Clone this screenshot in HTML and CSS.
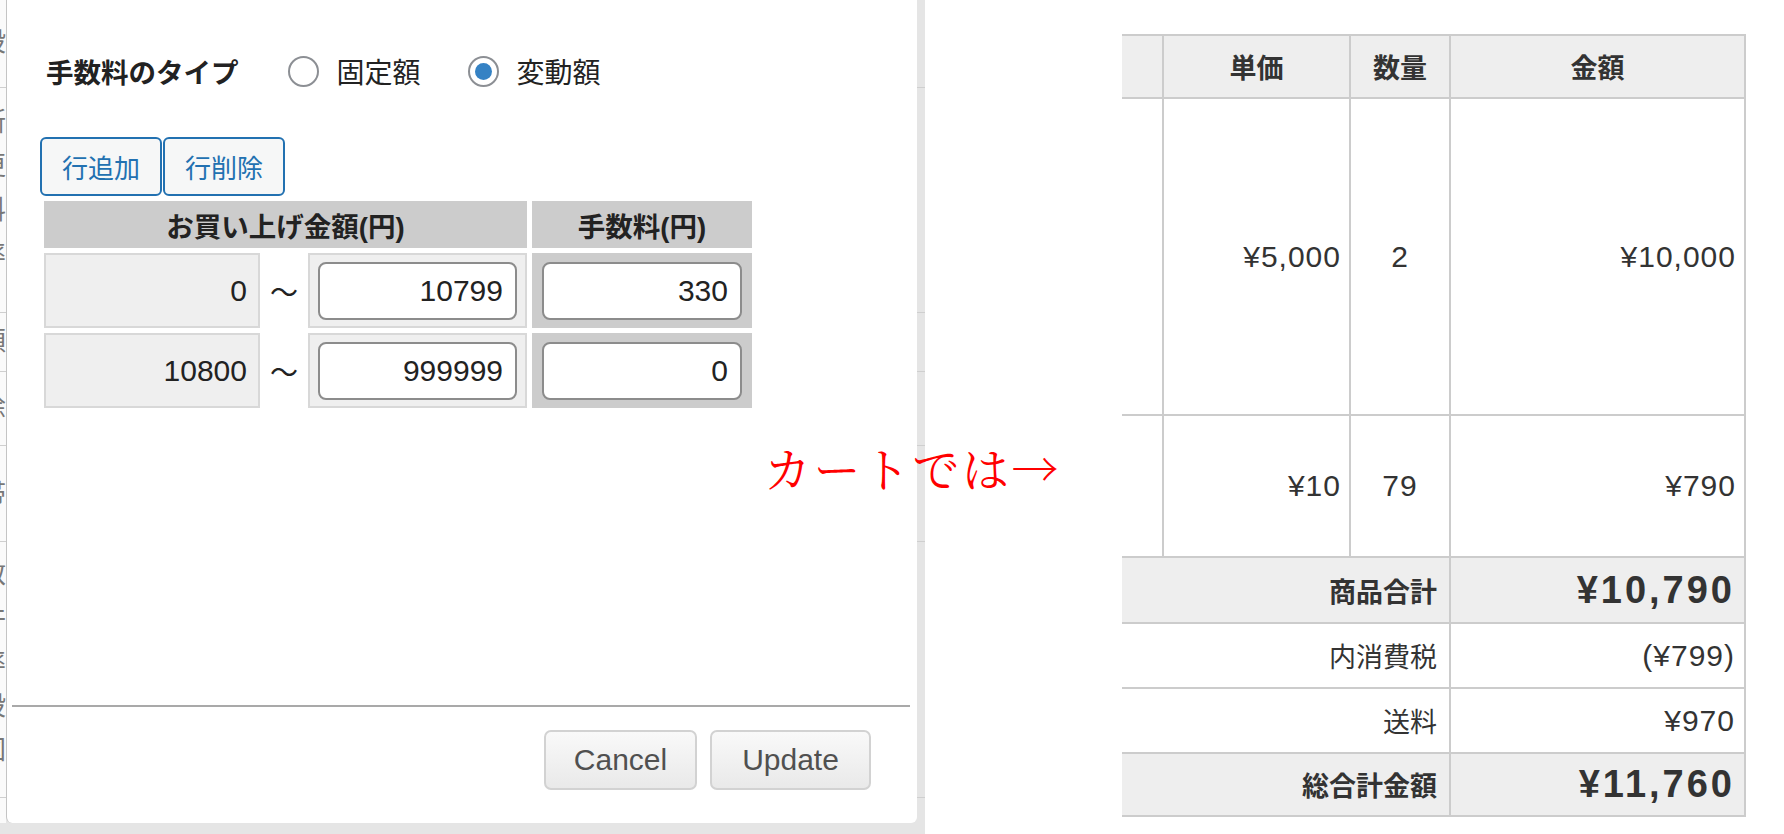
FILE: index.html
```html
<!DOCTYPE html>
<html lang="ja">
<head>
  <meta charset="UTF-8" />
  <meta name="viewport" content="width=device-width, initial-scale=1.0"/>
  <title>手数料の設定</title>
  <link rel="stylesheet" href="styles.css">
</head>
<body>

<div class="stage">
  <!-- page behind the dialog, only a sliver shows -->
  <div class="behind">
    <div class="behind-row"><span>設</span></div>
    <div class="behind-row"><span>新</span><span>更</span><span>料</span><span>率</span></div>
    <div class="behind-row"><span>額</span></div>
    <div class="behind-row"><span>除</span></div>
    <div class="behind-row"><span>帯</span></div>
    <div class="behind-row"><span>数</span><span>件</span><span>率</span><span>設</span><span>図</span></div>
    <div class="behind-row"></div>
  </div>

  <div class="modal">
    <div class="modal-body">
      <div class="fee-type">
        <h2>手数料のタイプ</h2>
        <label class="opt"><input type="radio" name="feetype"> 固定額</label>
        <label class="opt"><input type="radio" name="feetype" checked> 変動額</label>
      </div>

      <div class="row-btns">
        <button class="btn-line">行追加</button>
        <button class="btn-line">行削除</button>
      </div>

      <table class="range-table">
        <thead>
          <tr>
            <th colspan="3">お買い上げ金額(円)</th>
            <th>手数料(円)</th>
          </tr>
        </thead>
        <tbody>
          <tr>
            <td class="from">0</td>
            <td class="tilde">〜</td>
            <td class="to"><input class="num" type="text" value="10799"></td>
            <td class="fee"><input class="num" type="text" value="330"></td>
          </tr>
          <tr>
            <td class="from">10800</td>
            <td class="tilde">〜</td>
            <td class="to"><input class="num" type="text" value="999999"></td>
            <td class="fee"><input class="num" type="text" value="0"></td>
          </tr>
        </tbody>
      </table>
    </div>

    <div class="modal-foot">
      <hr>
      <div class="foot-btns">
        <button class="btn-plain cancel">Cancel</button>
        <button class="btn-plain update">Update</button>
      </div>
    </div>
  </div>
</div>

<div class="cart">
  <table class="cart-table">
    <colgroup>
      <col class="c-item">
      <col class="c-price">
      <col class="c-qty">
      <col class="c-amount">
    </colgroup>
    <thead>
      <tr>
        <th class="item"></th>
        <th>単価</th>
        <th>数量</th>
        <th>金額</th>
      </tr>
    </thead>
    <tbody>
      <tr class="line big">
        <td class="item"></td>
        <td class="money">¥5,000</td>
        <td class="qty">2</td>
        <td class="money">¥10,000</td>
      </tr>
      <tr class="line">
        <td class="item"></td>
        <td class="money">¥10</td>
        <td class="qty">79</td>
        <td class="money">¥790</td>
      </tr>
      <tr class="sum strong">
        <td class="label" colspan="3">商品合計</td>
        <td class="money">¥10,790</td>
      </tr>
      <tr class="sum">
        <td class="label" colspan="3">内消費税</td>
        <td class="money">(¥799)</td>
      </tr>
      <tr class="sum">
        <td class="label" colspan="3">送料</td>
        <td class="money">¥970</td>
      </tr>
      <tr class="sum strong grand">
        <td class="label" colspan="3">総合計金額</td>
        <td class="money">¥11,760</td>
      </tr>
    </tbody>
  </table>
</div>

<div class="cart-note">カートでは→</div>

</body>
</html>
```

FILE: styles.css
```css
body {
  margin: 0;
  width: 1784px;
  height: 834px;
  overflow: hidden;
  position: relative;
  display: flex;
  background: #fff;
  font-family: "Liberation Sans", "Noto Sans CJK JP", sans-serif;
  color: #222;
}

/* left half : dialog over the admin page */
.stage {
  position: relative;
  flex: none;
  width: 925px;
  height: 834px;
  background: #e5e5e5;
}
.behind {
  width: 925px;
  height: 823px;
  overflow: hidden;
  background: linear-gradient(to right, #fafafa 0, #fafafa 6px, transparent 6px);
}
.behind-row {
  box-sizing: border-box;
  border-bottom: 1px solid #cfcfcf;
  font-size: 26px;
  color: #777;
  overflow: hidden;
}
.behind-row span {
  display: block;
  margin-left: -20px;
  line-height: 44px;
}
.behind-row:nth-child(1) { height: 88px; padding-top: 20px; }
.behind-row:nth-child(2) { height: 225px; padding-top: 12px; }
.behind-row:nth-child(3) { height: 59px; padding-top: 6px; }
.behind-row:nth-child(4) { height: 74px; padding-top: 14px; }
.behind-row:nth-child(5) { height: 96px; padding-top: 26px; }
.behind-row:nth-child(6) { height: 256px; padding-top: 10px; }
.behind-row:nth-child(7) { height: 25px; border-bottom: none; }

.modal {
  position: absolute;
  left: 6px;
  top: 0;
  width: 911px;
  height: 823px;
  box-sizing: border-box;
  background: #fff;
  border-left: 1px solid #c4c4c4;
  border-radius: 0 0 6px 6px;
  display: flex;
  flex-direction: column;
}
.modal-body {
  flex: 1;
  padding: 49px 0 0 33px;
}

.fee-type {
  display: flex;
  align-items: center;
  height: 44px;
  padding-left: 6px;
}
.fee-type h2 {
  margin: 0 49px 0 0;
  font-size: 27.5px;
  font-weight: bold;
}
.opt {
  display: flex;
  align-items: center;
  gap: 18px;
  margin-right: 47px;
  font-size: 28px;
}
.opt input {
  appearance: none;
  -webkit-appearance: none;
  margin: 0;
  width: 31px;
  height: 31px;
  box-sizing: border-box;
  border: 2px solid #8c8f94;
  border-radius: 50%;
  background: #fff;
  display: grid;
  place-content: center;
}
.opt input:checked::before {
  content: "";
  display: block;
  width: 17px;
  height: 17px;
  border-radius: 50%;
  background: #3582c4;
}

.row-btns {
  display: flex;
  gap: 1px;
  margin-top: 44px;
}
.btn-line {
  width: 122px;
  height: 59px;
  padding: 0;
  border: 2px solid #2271b1;
  border-radius: 6px;
  background: #f6f7f7;
  color: #2271b1;
  font-family: inherit;
  font-size: 26px;
}

.range-table {
  border-spacing: 5px;
  margin-left: -1px;
}
.range-table th {
  height: 47px;
  padding: 0;
  background: #cccccc;
  font-size: 27.5px;
  font-weight: bold;
  text-align: center;
  color: #222;
}
.range-table td {
  box-sizing: border-box;
  height: 75px;
  padding: 0;
}
.range-table .from {
  width: 216px;
  padding-right: 11px;
  border: 2px solid #d8d8d8;
  background: #efefef;
  text-align: right;
  font-size: 30px;
}
.range-table .tilde {
  width: 38px;
  text-align: center;
  font-size: 28px;
}
.range-table .to {
  width: 219px;
  padding: 0 8px;
  border: 2px solid #d8d8d8;
  background: #efefef;
}
.range-table .fee {
  width: 220px;
  padding: 0 10px;
  background: #cccccc;
}
.num {
  display: block;
  width: 100%;
  height: 58px;
  box-sizing: border-box;
  padding: 0 12px;
  border: 2px solid #8c8c8c;
  border-radius: 8px;
  background: #fff;
  text-align: right;
  font-family: "Liberation Sans", sans-serif;
  font-size: 30px;
  color: #222;
}

.modal-foot {
  padding: 0 7px 0 5px;
}
.modal-foot hr {
  margin: 0;
  border: none;
  border-top: 2px solid #a9a9a9;
}
.foot-btns {
  display: flex;
  justify-content: flex-end;
  gap: 13px;
  padding: 23px 39px 33px 0;
}
.btn-plain {
  height: 60px;
  padding: 0;
  border: 2px solid #d2d2d2;
  border-radius: 7px;
  background: linear-gradient(#f9f9f9, #e9e9e9);
  color: #505050;
  font-family: "Liberation Sans", sans-serif;
  font-size: 30px;
}
.cancel { width: 153px; }
.update { width: 161px; }

/* right half : cart totals */
.cart {
  padding: 34px 0 0 197px;
}
.cart-table {
  border-collapse: collapse;
  color: #333;
}
.c-item { width: 41px; }
.c-price { width: 187px; }
.c-qty { width: 100px; }
.c-amount { width: 295px; }

.cart-table th,
.cart-table td {
  border: 2px solid #cccccc;
  padding: 0 12px;
}
.cart-table .item {
  border-left: none;
  padding: 0;
}
.cart-table th {
  height: 61px;
  background: #eeeeee;
  font-size: 27px;
  font-weight: bold;
  text-align: center;
}
.line td {
  height: 140px;
  font-size: 30px;
  letter-spacing: 1px;
}
.line.big td { height: 315px; }
.line td.money {
  padding-right: 8px;
}
.money {
  text-align: right;
}
.qty {
  text-align: center;
}
.sum td {
  height: 63px;
  font-size: 30px;
  letter-spacing: 1px;
  padding-right: 9px;
}
.sum .label {
  border-left: none;
  font-size: 27px;
  letter-spacing: 0;
  text-align: right;
  padding-right: 12px;
}
.sum.strong td {
  height: 64px;
  background: #eeeeee;
  font-weight: bold;
  font-size: 38px;
  letter-spacing: 3px;
  padding-right: 9px;
}
.sum.strong .label {
  font-size: 27px;
  letter-spacing: 0;
  padding-right: 12px;
}
.sum.grand td {
  height: 61px;
}

.cart-note {
  position: absolute;
  left: 764px;
  top: 443px;
  z-index: 2;
  font-family: "Noto Serif CJK JP", "Noto Sans CJK JP", serif;
  font-size: 47px;
  line-height: 1;
  letter-spacing: 2.5px;
  color: #ff0000;
  white-space: nowrap;
}
```
